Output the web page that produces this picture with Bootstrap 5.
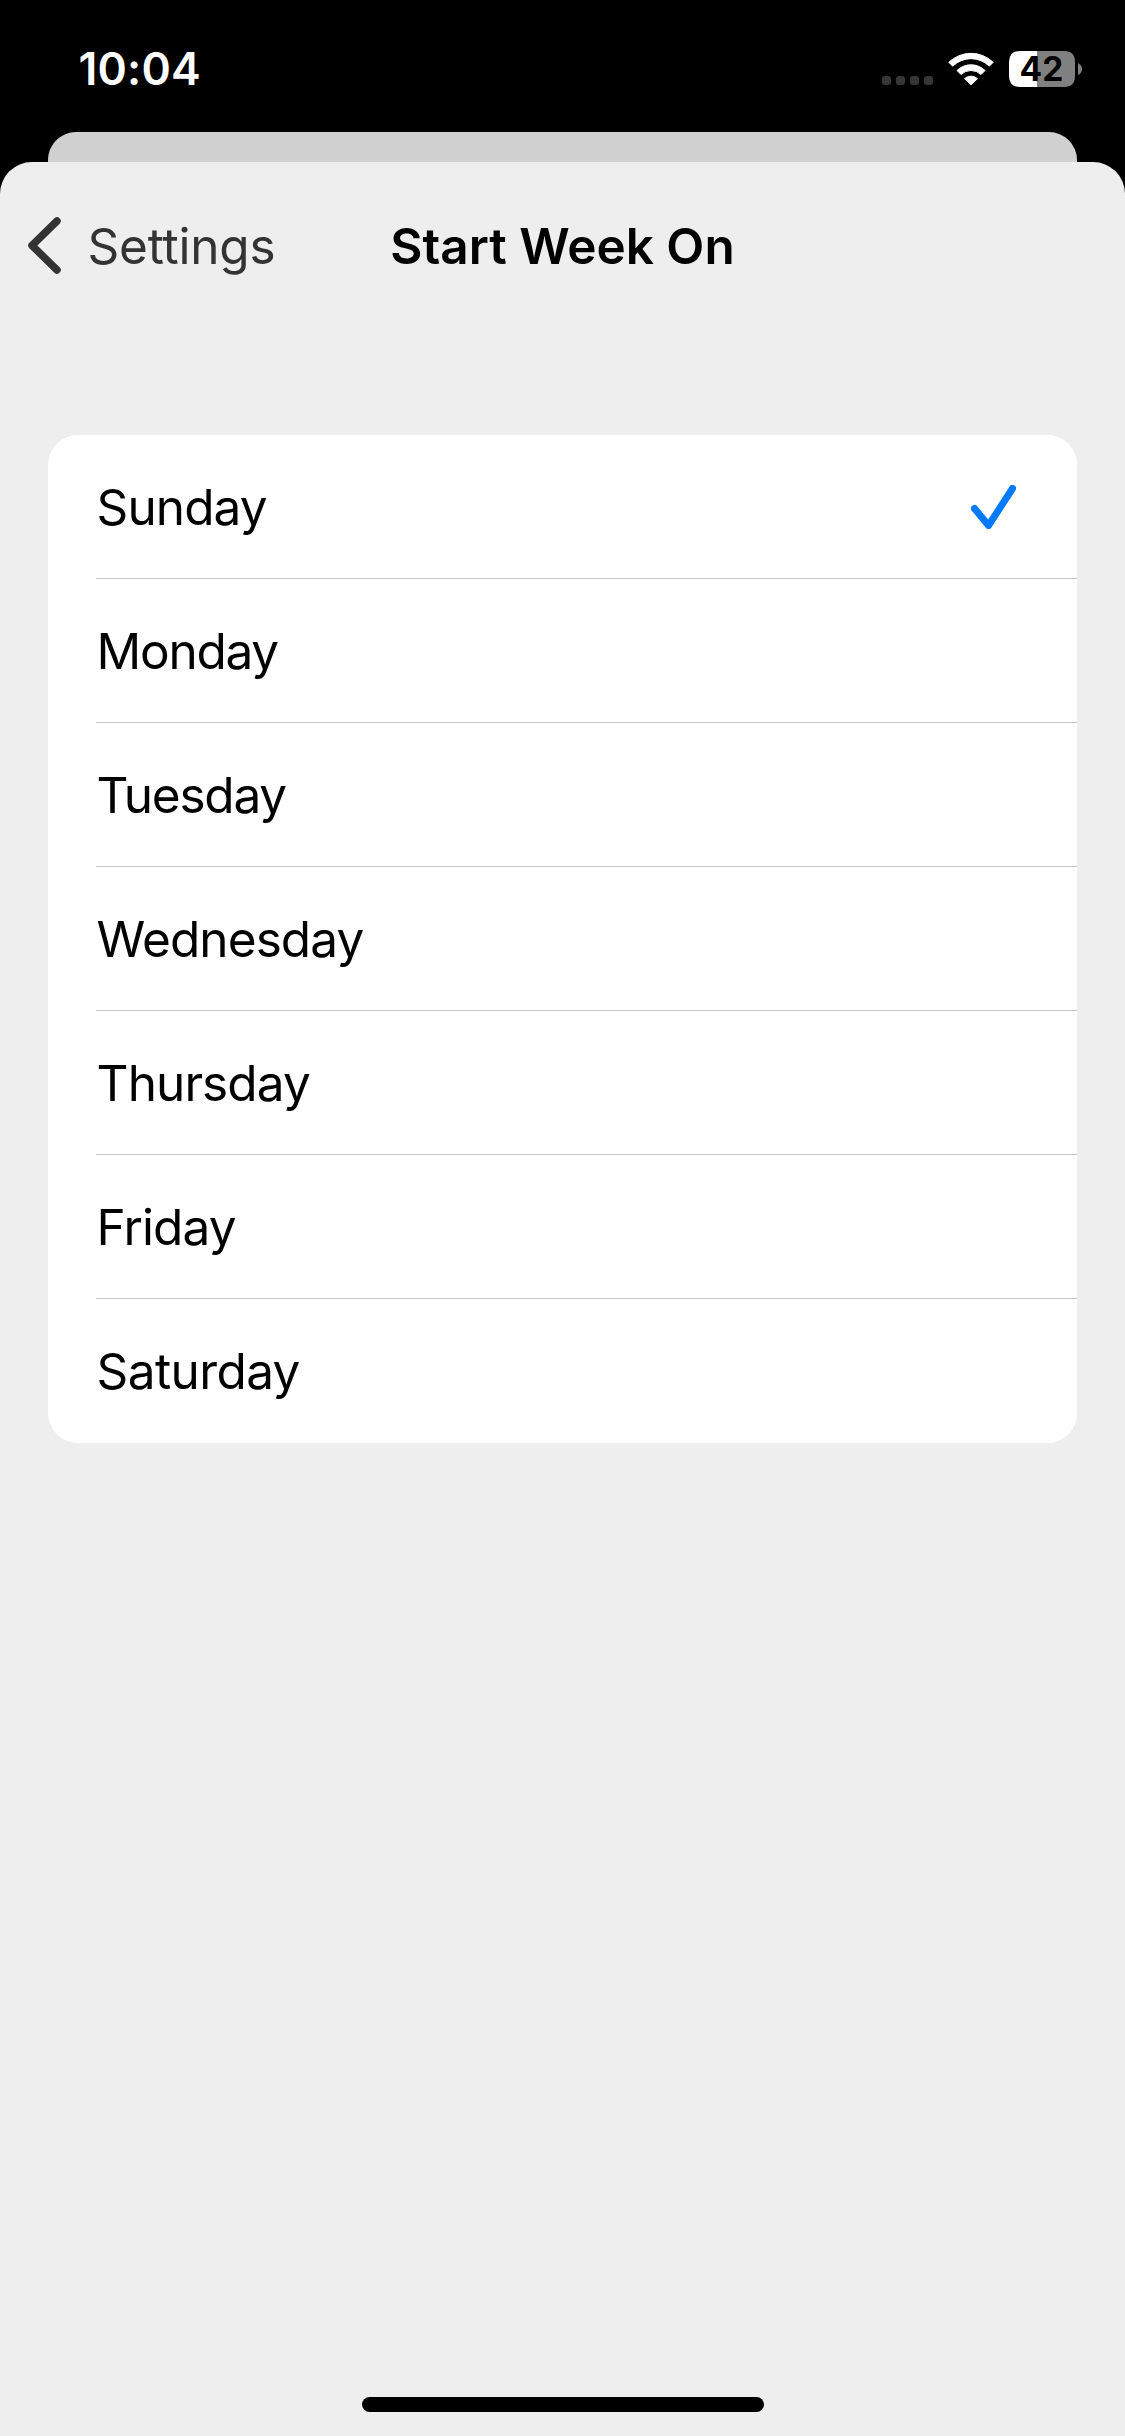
<!DOCTYPE html>
<html lang="en">
<head>
<meta charset="utf-8">
<title>Start Week On</title>
<link href="https://cdn.jsdelivr.net/npm/bootstrap@5.3.0/dist/css/bootstrap.min.css" rel="stylesheet">
<style>
body{background:#000;color:#000;font-family:Inter,"Liberation Sans",sans-serif;width:1125px;height:2436px;overflow:hidden}
.statusbar{height:132px;padding:15px 43px 9px 78.5px;color:#fff}
.clock{font-size:44.5px;font-weight:600;line-height:1;letter-spacing:.2px}
.status-icons{gap:15px}
.cell-dots{margin-top:23px}
.backsheet{height:30px;margin:0 48px;background:#d0d0d0;border-radius:28px 28px 0 0}
.frontsheet{background:#eee;border-radius:32px 32px 0 0}
.navrow{display:grid;grid-template-columns:1fr auto 1fr;height:168px;padding:0 28px;font-size:49.5px;line-height:1}
.backlink{color:#333;text-decoration:none;gap:25.5px;letter-spacing:-.2px}
.backlink span,.navtitle{padding-top:2px}
.backlink svg{margin-bottom:1px}
.navtitle{font-weight:600}
.daylist{margin:105px 48px 0;border-radius:30px;background:#fff;overflow:hidden}
.dayrow{height:144px;margin-left:48px;padding:2px 61px 0 .6px;border:0;border-bottom:1px solid #c6c6c8;background:#fff;color:#000;font-size:49.5px;line-height:1;letter-spacing:-.9px;border-radius:0!important}
.dayrow svg{margin-bottom:2px}
.dayrow:nth-child(2){letter-spacing:-1.25px}
.dayrow:nth-child(3){letter-spacing:-1.2px}
.dayrow:nth-child(7){letter-spacing:-.6px}
.dayrow:last-child{border-bottom-color:transparent}
.homebar{width:402px;height:15px;border-radius:8px;background:#000;margin-bottom:24px}
</style>
</head>
<body class="d-flex flex-column">
<header class="statusbar d-flex align-items-center justify-content-between">
  <div class="clock">10:04</div>
  <div class="status-icons d-flex align-items-center">
    <svg class="cell-dots" width="51" height="9" viewBox="0 0 51 9" fill="#363636"><rect width="9" height="9" rx="3"/><rect x="14" width="9" height="9" rx="3"/><rect x="28" width="9" height="9" rx="3"/><rect x="42" width="9" height="9" rx="3"/></svg>
    <svg width="46" height="34" viewBox="0 0 46 34" fill="#fff" stroke="#fff" stroke-width="1" stroke-linejoin="round"><path d="M.8 10.300A32 32 0 0 1 45.200 10.300L41.300 14.200A26 26 0 0 0 4.700 14.200Z"/><path d="M9 18.500A20 20 0 0 1 37 18.500L33 22.500A14.500 14.500 0 0 0 13 22.500Z"/><path d="M16.500 26.700A9.500 9.500 0 0 1 29.500 26.700L23 32.800Z"/></svg>
    <svg width="73" height="36" viewBox="0 0 73 36"><path fill="#808080" d="M28 0h27q11 0 11 11v14q0 11-11 11H28zM69 12q4 2 4 6t-4 6z"/><path fill="#fff" d="M28 0H11Q0 0 0 11v14q0 11 11 11h17z"/><text x="32.5" y="30" text-anchor="middle" font-size="33.500" font-weight="700">42</text></svg>
  </div>
</header>
<div class="backsheet flex-shrink-0"></div>
<main class="frontsheet d-flex flex-column flex-grow-1">
  <nav class="navrow align-items-center">
    <a class="backlink d-flex align-items-center" href="#"><svg width="34" height="57" viewBox="0 0 34 57" fill="none" stroke="#333" stroke-width="7.500" stroke-linecap="round" stroke-linejoin="round"><path d="M29 4 4 28.500 29 53"/></svg><span>Settings</span></a>
    <span class="navtitle">Start Week On</span>
  </nav>
  <div class="daylist list-group">
    <div class="dayrow list-group-item d-flex align-items-center justify-content-between"><span>Sunday</span><svg width="45" height="44" viewBox="0 0 45 44" fill="none" stroke="#007aff" stroke-width="7" stroke-linecap="round" stroke-linejoin="round"><path d="M3.500 23.500 17.500 40.500 41.500 3.500"/></svg></div>
    <div class="dayrow list-group-item d-flex align-items-center"><span>Monday</span></div>
    <div class="dayrow list-group-item d-flex align-items-center"><span>Tuesday</span></div>
    <div class="dayrow list-group-item d-flex align-items-center"><span>Wednesday</span></div>
    <div class="dayrow list-group-item d-flex align-items-center"><span>Thursday</span></div>
    <div class="dayrow list-group-item d-flex align-items-center"><span>Friday</span></div>
    <div class="dayrow list-group-item d-flex align-items-center"><span>Saturday</span></div>
  </div>
  <div class="homebar mt-auto mx-auto"></div>
</main>
<script src="https://cdn.jsdelivr.net/npm/bootstrap@5.3.0/dist/js/bootstrap.bundle.min.js"></script>
</body>
</html>
